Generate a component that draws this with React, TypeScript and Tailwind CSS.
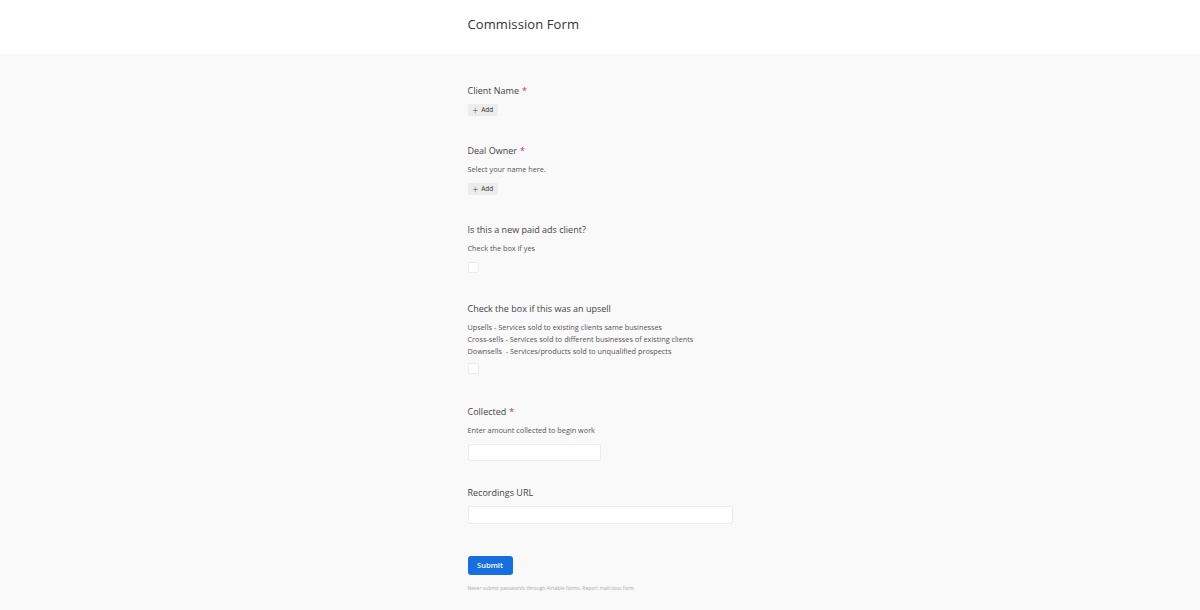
import React from "react";

function Add() {
  return (
    <button className="self-start flex items-center gap-[3px] h-[12px] px-[5px] w-[30px] rounded-[2px] bg-[#ececec] text-[6.5px] text-[#333] leading-none">
      <span className="text-[10px] leading-none font-light text-[#444] -mt-[1px]">+</span>
      <span>Add</span>
    </button>
  );
}

function Label({ children, req }: { children: React.ReactNode; req?: boolean }) {
  return (
    <div className="text-[9px] leading-[12px] text-[#444]">
      {children}
      {req && <span className="text-[#e0245e] ml-[3px]">*</span>}
    </div>
  );
}

function Desc({ children }: { children: React.ReactNode }) {
  return <div className="text-[7.3px] leading-[12px] text-[#555]">{children}</div>;
}

function Box() {
  return <div className="w-[11px] h-[11px] bg-white border border-[#ececec] rounded-[1px]" />;
}

export default function App() {
  return (
    <div className="min-h-[610px] bg-[#f9f9f9]" style={{ fontFamily: '"Open Sans", "Noto Sans", sans-serif' }}>
      <div className="h-[54px] bg-white flex items-center">
        <div className="w-[265px] mx-auto">
          <h1 className="text-[13px] text-[#333] tracking-[0.1px] -mt-[4px]">Commission Form</h1>
        </div>
      </div>
      <div className="w-[265px] mx-auto pt-[31px] flex flex-col">
        <div className="flex flex-col gap-[7px]">
          <Label req>Client Name</Label>
          <Add />
        </div>
        <div className="flex flex-col mt-[29px]">
          <Label req>Deal Owner</Label>
          <div className="mt-[6px]"><Desc>Select your name here.</Desc></div>
          <div className="mt-[8px] flex"><Add /></div>
        </div>
        <div className="flex flex-col mt-[29px]">
          <Label>Is this a new paid ads client?</Label>
          <div className="mt-[6px]"><Desc>Check the box if yes</Desc></div>
          <div className="mt-[8px]"><Box /></div>
        </div>
        <div className="flex flex-col mt-[30px]">
          <Label>Check the box if this was an upsell</Label>
          <div className="mt-[6px]">
            <Desc>Upsells - Services sold to existing clients same businesses</Desc>
            <Desc>Cross-sells - Services sold to different businesses of existing clients</Desc>
            <Desc>Downsells&nbsp; - Services/products sold to unqualified prospects</Desc>
          </div>
          <div className="mt-[6px]"><Box /></div>
        </div>
        <div className="flex flex-col mt-[32px]">
          <Label req>Collected</Label>
          <div className="mt-[6px]"><Desc>Enter amount collected to begin work</Desc></div>
          <div className="mt-[8px] w-[133px] h-[17px] bg-white border border-[#ececec] rounded-[2px]" />
        </div>
        <div className="flex flex-col mt-[26px]">
          <Label>Recordings URL</Label>
          <div className="mt-[7px] w-[265px] h-[18px] bg-white border border-[#ececec] rounded-[2px]" />
        </div>
        <div className="mt-[26px]">
          <button className="h-[19px] w-[45px] rounded-[3px] bg-[#166ee1] text-white text-[7.5px] font-semibold">Submit</button>
        </div>
        <div className="mt-[10px] text-[5px] text-[#aaa]">Never submit passwords through Airtable forms. Report malicious form</div>
      </div>
    </div>
  );
}
